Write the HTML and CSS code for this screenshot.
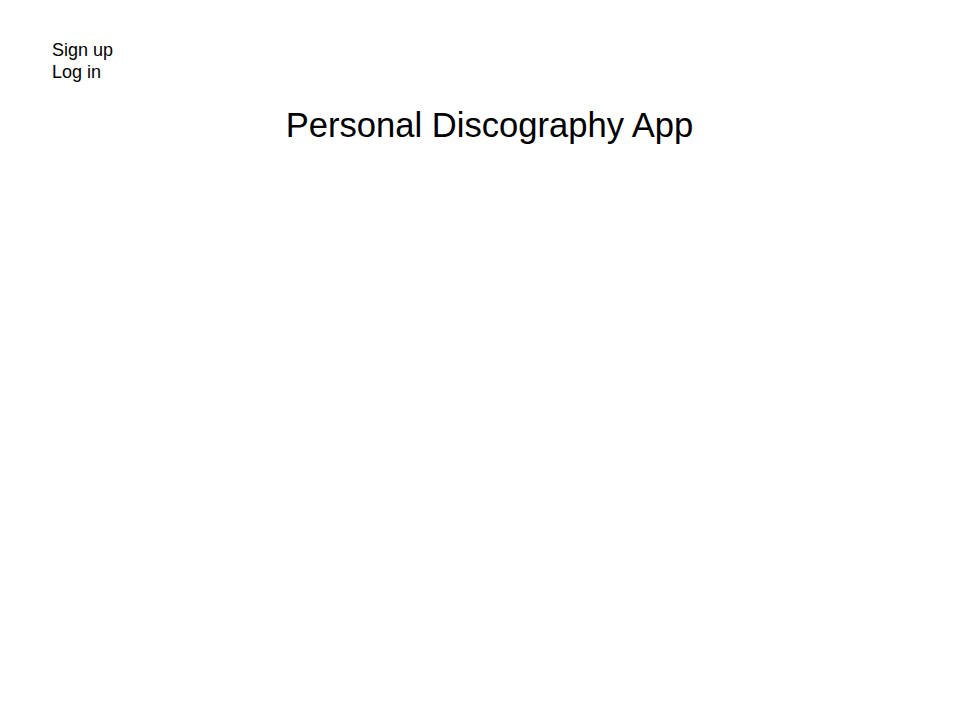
FILE: index.html
```html
<!DOCTYPE html>
<html lang="en">
<head>
<meta charset="utf-8">
<title>Personal Discography App</title>
<link rel="stylesheet" href="styles.css">
</head>
<body>
<nav class="nav">
  <a class="nav-link" href="#">Sign up</a>
  <a class="nav-link" href="#">Log in</a>
</nav>
<main class="main">
  <h1 class="title">Personal Discography App</h1>
</main>
</body>
</html>
```
FILE: styles.css
```css
html, body {
  margin: 0;
  background: #fff;
  color: #000;
  font-family: "Liberation Sans", Arial, sans-serif;
}
.nav {
  display: flex;
  flex-direction: column;
  align-items: flex-start;
  padding: 39px 0 0 52px;
}
.nav-link {
  font-size: 18px;
  line-height: 22px;
  color: #000;
  text-decoration: none;
}
.main {
  padding-left: 19px;
}
.title {
  margin: 22px 0 0;
  font-size: 34.6px;
  font-weight: normal;
  line-height: 40px;
  text-align: center;
}
```
